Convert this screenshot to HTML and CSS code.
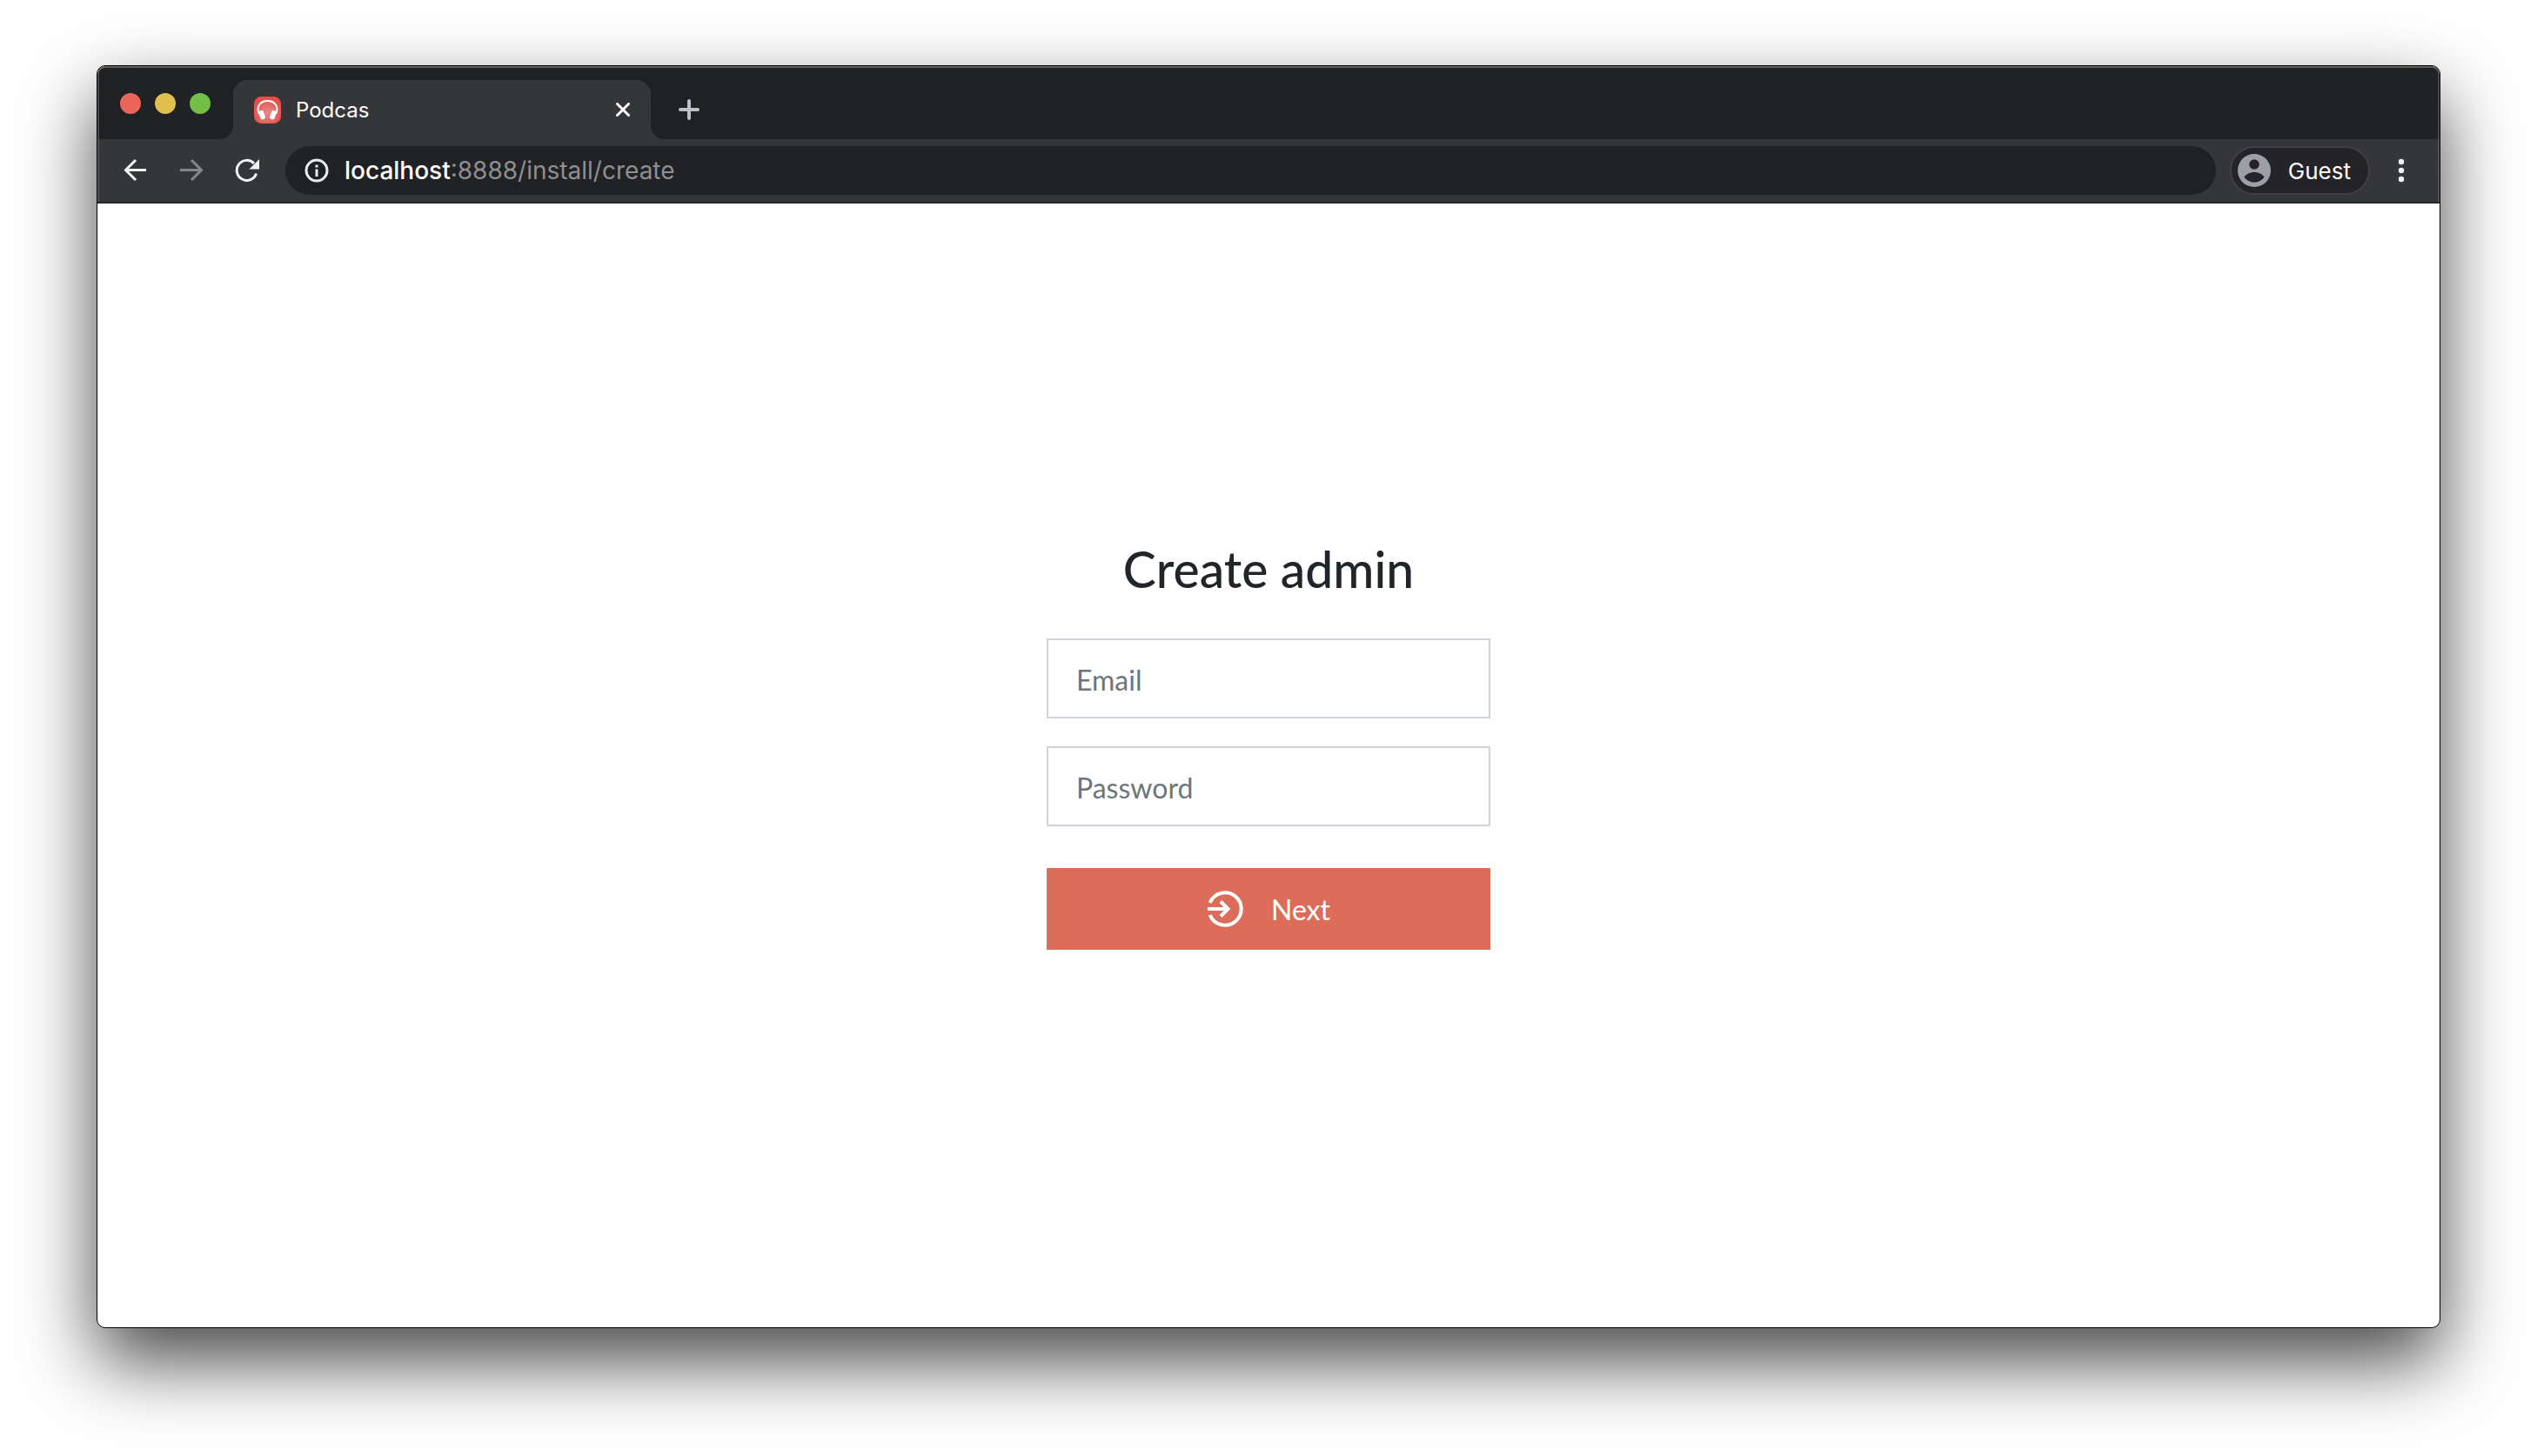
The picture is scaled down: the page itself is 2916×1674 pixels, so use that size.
FILE: index.html
```html
<!DOCTYPE html>
<html lang="en">
<head>
<meta charset="utf-8">
<meta name="viewport" content="width=device-width, initial-scale=1">
<title>Podcas</title>
<link rel="stylesheet" href="styles.css">
</head>
<body>
<div class="window">
  <header class="tabstrip">
    <div class="lights">
      <button class="light light-close" type="button" aria-label="Close window"></button>
      <button class="light light-minimize" type="button" aria-label="Minimize window"></button>
      <button class="light light-zoom" type="button" aria-label="Zoom window"></button>
    </div>
    <div class="tab">
      <svg class="favicon" viewBox="0 0 30 30" aria-hidden="true">
        <defs>
          <radialGradient id="fav" cx="50%" cy="60%" r="60%">
            <stop offset="0" stop-color="#ea8b88"/>
            <stop offset="1" stop-color="#e24b47"/>
          </radialGradient>
        </defs>
        <rect width="30" height="30" rx="8" fill="url(#fav)"/>
        <path d="M5.500 19C2 10 8 4.800 15 4.800S28 10 24.500 19" fill="none" stroke="#fff" stroke-width="1.800"/>
        <rect x="-2.800" y="-5" width="5.600" height="10" rx="2" fill="#fff" transform="translate(8.800 20.500) rotate(-20)"/>
        <rect x="-2.800" y="-5" width="5.600" height="10" rx="2" fill="#fff" transform="translate(21.200 20.500) rotate(20)"/>
      </svg>
      <span class="tab-title">Podcas</span>
      <button class="icon-button" type="button" aria-label="Close tab">
        <svg width="16" height="16" viewBox="0 0 16 16"><path d="M1.500 1.500l13 13M14.500 1.500l-13 13" fill="none" stroke="#fff" stroke-width="3" stroke-linecap="round"/></svg>
      </button>
    </div>
    <button class="icon-button new-tab" type="button" aria-label="New tab">
      <svg width="24" height="24" viewBox="0 0 24 24"><path d="M12 2v20M2 12h20" fill="none" stroke="#bdc1c6" stroke-width="4" stroke-linecap="round"/></svg>
    </button>
  </header>
  <nav class="toolbar" aria-label="Browser toolbar">
    <div class="history">
      <button class="icon-button" type="button" aria-label="Back">
        <svg width="28" height="28" viewBox="0 0 28 28"><path d="M26 13.500H3M14 2L2.500 13.500 14 25" fill="none" stroke="#f1f3f4" stroke-width="3"/></svg>
      </button>
      <button class="icon-button" type="button" aria-label="Forward">
        <svg width="28" height="28" viewBox="0 0 28 28"><path d="M1 13.500h24M14 2l11.500 11.500L14 25" fill="none" stroke="#86878a" stroke-width="3"/></svg>
      </button>
      <button class="icon-button" type="button" aria-label="Reload">
        <svg width="28" height="28" viewBox="0 0 28 28"><path d="M24.600 17.500A11.500 11.500 0 1 1 22 5.900" fill="none" stroke="#f1f3f4" stroke-width="3"/><path d="M28 1v11.500H16.500z" fill="#f1f3f4"/></svg>
      </button>
    </div>
    <div class="address">
      <svg width="28" height="28" viewBox="0 0 28 28" aria-hidden="true"><circle cx="14" cy="14" r="12" fill="none" stroke="#e8eaed" stroke-width="3"/><path d="M12.500 12.500h3v8.500h-3zM12.500 7.500h3v3h-3z" fill="#e8eaed"/></svg>
      <span class="url"><span class="host">localhost</span>:8888/install/create</span>
    </div>
    <button class="profile" type="button">
      <svg width="38" height="38" viewBox="0 0 38 38" aria-hidden="true"><circle cx="19" cy="19" r="19" fill="#9aa0a6"/><circle cx="19" cy="12" r="5.800" fill="#242328"/><path d="M7.500 26.500C10 22.500 15 21 19 21s9 1.500 11.500 5.500C28 30.500 23 32.500 19 32.500S10 30.500 7.500 26.500z" fill="#242328"/></svg>
      <span>Guest</span>
    </button>
    <button class="icon-button menu" type="button" aria-label="Menu">
      <svg width="8" height="28" viewBox="0 0 8 28"><g fill="#f1f3f4"><circle cx="4" cy="4" r="3.200"/><circle cx="4" cy="14" r="3.200"/><circle cx="4" cy="24" r="3.200"/></g></svg>
    </button>
  </nav>
  <main class="page">
    <form class="form">
      <h1 class="title">Create admin</h1>
      <input class="field" type="email" placeholder="Email" aria-label="Email">
      <input class="field" type="password" placeholder="Password" aria-label="Password">
      <button class="submit" type="button">
        <svg width="42" height="42" viewBox="0 0 42 42" aria-hidden="true"><path d="M3.700 14A18.700 18.700 0 1 1 3.700 28" fill="none" stroke="#fff" stroke-width="4"/><path d="M1 21h23M16 12.500l8.500 8.500-8.500 8.500" fill="none" stroke="#fff" stroke-width="4"/></svg>
        <span>Next</span>
      </button>
    </form>
  </main>
</div>
</body>
</html>
```
FILE: styles.css
```css
* {
  box-sizing: border-box;
}

body {
  margin: 0;
  min-height: 100vh;
  display: flex;
  padding: 75px 111px 147px;
  background: #fff;
  font-family: Inter, "Liberation Sans", sans-serif;
}

button {
  border: 0;
  padding: 0;
  font: inherit;
  color: inherit;
  background: none;
}

svg {
  display: block;
  flex: none;
}

.window {
  flex: 1;
  display: flex;
  flex-direction: column;
  overflow: hidden;
  border: 1px solid #000;
  border-radius: 10px;
  background: #fff;
  box-shadow: 0 38px 86px rgba(0, 0, 0, 0.72);
}

.tabstrip {
  display: flex;
  height: 84px;
  padding-left: 26px;
  border-radius: 9px 9px 0 0;
  background: #202124;
  box-shadow: inset 0 2px #5f6161, inset 2px 0 #45474a, inset -2px 0 #45474a;
}

.lights {
  display: flex;
  gap: 16px;
  padding-top: 31px;
  margin-right: 26px;
}

.light {
  width: 24px;
  height: 24px;
  border-radius: 50%;
}

.light-close {
  background: #ec6559;
}

.light-minimize {
  background: #e0c04c;
}

.light-zoom {
  background: #72be47;
}

.tab {
  position: relative;
  display: flex;
  align-items: center;
  width: 480px;
  height: 68px;
  margin-top: 16px;
  padding: 0 24px;
  border-radius: 16px 16px 0 0;
  background: #35363a;
  color: #fff;
  font-size: 24px;
}

.tab::before,
.tab::after {
  content: "";
  position: absolute;
  bottom: 0;
  width: 16px;
  height: 16px;
}

.tab::before {
  right: 100%;
  background: radial-gradient(circle at 0 0, transparent 16px, #35363a 16px);
}

.tab::after {
  left: 100%;
  background: radial-gradient(circle at 100% 0, transparent 16px, #35363a 16px);
}

.favicon {
  width: 31px;
  height: 31px;
}

.tab-title {
  flex: 1;
  margin-left: 17px;
}

.icon-button {
  display: flex;
}

.new-tab {
  align-self: center;
  margin: 16px 0 0 32px;
}

.toolbar {
  display: flex;
  align-items: center;
  height: 74px;
  padding: 0 40px 2px 30px;
  background: #35363a;
  box-shadow: inset 0 -2px #28292c, inset 2px 0 #505154, inset -2px 0 #505154;
}

.history {
  display: flex;
  gap: 36px;
}

.address {
  flex: 1;
  display: flex;
  align-items: center;
  gap: 18px;
  height: 56px;
  margin: 0 16px 0 30px;
  padding: 0 22px;
  border-radius: 28px;
  background: #202124;
  color: #8e8f91;
  font-size: 28px;
}

.host {
  color: #fff;
  font-weight: 500;
}

.profile {
  display: flex;
  align-items: center;
  gap: 20px;
  height: 56px;
  padding: 0 20px 0 7px;
  border: 2px solid #414145;
  border-radius: 28px;
  background: #242328;
  color: #fff;
  font-size: 26px;
}

.menu {
  margin-left: 32px;
}

.page {
  flex: 1;
  display: flex;
  align-items: center;
  justify-content: center;
  padding-bottom: 48px;
  font-family: Lato, "Liberation Sans", sans-serif;
}

.form {
  display: flex;
  flex-direction: column;
  gap: 32px;
  width: 510px;
  font-size: 32px;
}

.title {
  margin: 0 0 14px;
  color: #212529;
  font-size: 57px;
  font-weight: 500;
  line-height: 68px;
  text-align: center;
}

.field {
  height: 92px;
  padding: 2px 32px 0;
  border: 2px solid #ced4da;
  border-radius: 0;
  background: #fff;
  color: #495057;
  font: inherit;
}

.field::placeholder {
  color: #6c757d;
  opacity: 1;
}

.submit {
  display: flex;
  align-items: center;
  justify-content: center;
  gap: 32px;
  height: 94px;
  margin-top: 16px;
  background: #dc6d5a;
  color: #fff;
}
```
